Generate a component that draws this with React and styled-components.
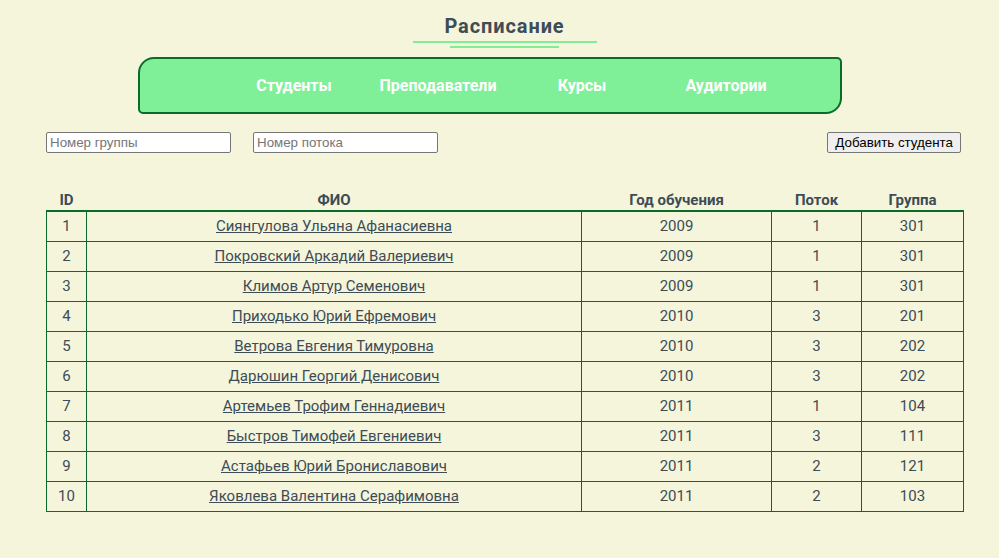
import React from "react";
import styled, { createGlobalStyle } from "styled-components";

const GlobalStyle = createGlobalStyle`
  body {
    margin: 0;
    background: #f5f5dc;
    font-family: Roboto, "Liberation Sans", sans-serif;
    color: #35495e;
  }
`;

const students = [
  [1, "Сиянгулова Ульяна Афанасиевна", 2009, 1, 301],
  [2, "Покровский Аркадий Валериевич", 2009, 1, 301],
  [3, "Климов Артур Семенович", 2009, 1, 301],
  [4, "Приходько Юрий Ефремович", 2010, 3, 201],
  [5, "Ветрова Евгения Тимуровна", 2010, 3, 202],
  [6, "Дарюшин Георгий Денисович", 2010, 3, 202],
  [7, "Артемьев Трофим Геннадиевич", 2011, 1, 104],
  [8, "Быстров Тимофей Евгениевич", 2011, 3, 111],
  [9, "Астафьев Юрий Брониславович", 2011, 2, 121],
  [10, "Яковлева Валентина Серафимовна", 2011, 2, 103],
];

const App = () => {
  return (
    <Page>
      <GlobalStyle />
      <Header>
        <Title>Расписание</Title>
        <Underline $width={184} />
        <Underline $width={109} />
      </Header>

      <Nav>
        <NavItem>Студенты</NavItem>
        <NavItem>Преподаватели</NavItem>
        <NavItem>Курсы</NavItem>
        <NavItem>Аудитории</NavItem>
      </Nav>

      <Toolbar>
        <Filters>
          <Input placeholder="Номер группы" />
          <Input placeholder="Номер потока" />
        </Filters>
        <Button>Добавить студента</Button>
      </Toolbar>

      <Table>
        <colgroup>
          <col style={{ width: 40 }} />
          <col style={{ width: 495 }} />
          <col style={{ width: 190 }} />
          <col style={{ width: 90 }} />
          <col style={{ width: 102 }} />
        </colgroup>
        <thead>
          <tr>
            <Th>ID</Th>
            <Th>ФИО</Th>
            <Th>Год обучения</Th>
            <Th>Поток</Th>
            <Th>Группа</Th>
          </tr>
        </thead>
        <Body>
          {students.map(([id, name, year, stream, group]) => (
            <tr key={id}>
              <Td>{id}</Td>
              <Td><NameLink href="#">{name}</NameLink></Td>
              <Td>{year}</Td>
              <Td>{stream}</Td>
              <Td>{group}</Td>
            </tr>
          ))}
        </Body>
      </Table>
    </Page>
  );
};

const Page = styled.div`
  padding: 14px 36px 40px 46px;
`;

const Header = styled.header`
  display: flex;
  flex-direction: column;
  align-items: center;
`;

const Title = styled.h1`
  margin: 0;
  font-size: 20px;
  font-weight: 700;
  letter-spacing: 0.9px;
  line-height: 24px;
  color: #3d4c55;
`;

const Underline = styled.div`
  width: ${(p) => p.$width}px;
  height: 2px;
  background: #80ee98;
  margin-top: 3px;
`;

const Nav = styled.nav`
  box-sizing: border-box;
  margin: 9px 0 0 92px;
  width: 704px;
  height: 57px;
  display: grid;
  grid-template-columns: repeat(4, 144px);
  align-items: center;
  padding-left: 82px;
  background: #80f098;
  border: 2px solid #0b6b2b;
  border-radius: 16px 5px 16px 5px;
`;

const NavItem = styled.a`
  text-align: center;
  color: #fff;
  font-weight: 700;
  font-size: 16px;
  cursor: pointer;
`;

const Toolbar = styled.div`
  display: flex;
  justify-content: space-between;
  align-items: center;
  margin-top: 18px;
  padding-right: 2px;
`;

const Filters = styled.div`
  display: flex;
  gap: 22px;
`;

const Input = styled.input`
  box-sizing: border-box;
  width: 185px;
  height: 21px;
  padding: 1px 3px;
  font-family: "Liberation Sans", Arial, sans-serif;
  font-size: 13.333px;
  border: 1px solid #767676;
  border-radius: 2px;
  background: #fff;
  &::placeholder {
    color: #757575;
  }
`;

const Button = styled.button`
  box-sizing: border-box;
  height: 21px;
  padding: 1px 7px;
  font-family: "Liberation Sans", Arial, sans-serif;
  font-size: 13.333px;
  color: #000;
  background: #efefef;
  border: 1px solid #767676;
  border-radius: 2px;
`;

const Table = styled.table`
  margin-top: 36px;
  width: 917px;
  border-collapse: collapse;
  table-layout: fixed;
  font-size: 15px;
`;

const Th = styled.th`
  font-weight: 700;
  height: 21px;
  padding: 0;
  text-align: center;
  vertical-align: middle;
  color: #3d4c55;
`;

const Body = styled.tbody`
  border-top: 2px solid #0b6b2b;
`;

const Td = styled.td`
  border: 1px solid #0b6b2b;
  height: 27px;
  padding: 0 0 2px;
  text-align: center;
  color: #3d4c55;
`;

const NameLink = styled.a`
  color: #3d4c55;
  text-decoration: underline;
`;

export default App;
